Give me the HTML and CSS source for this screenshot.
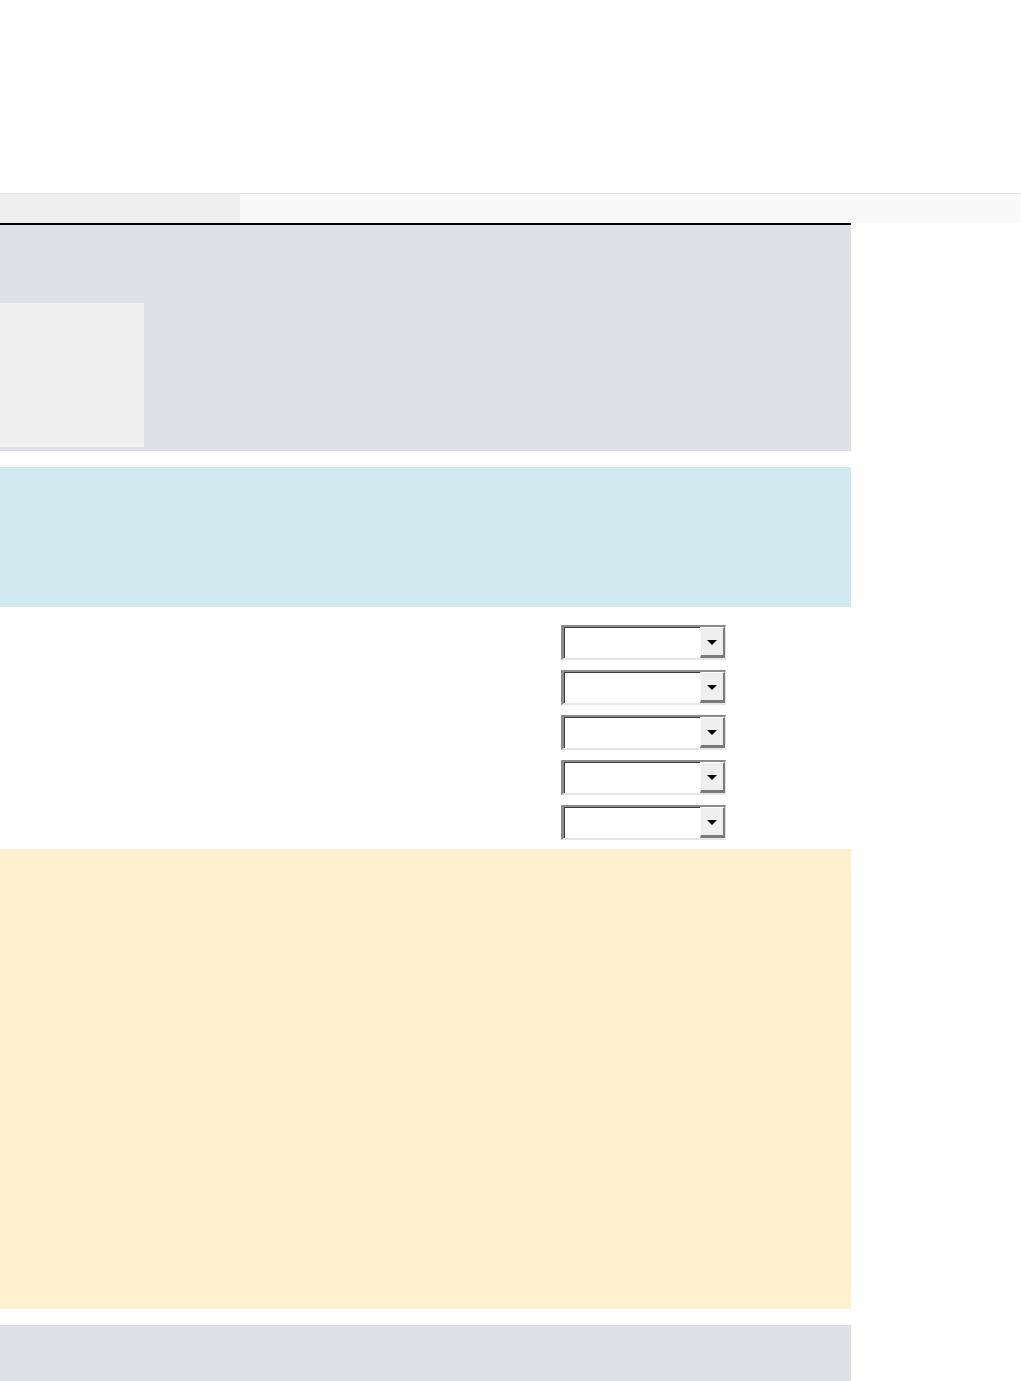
FILE: index.html
```html
<!DOCTYPE html>
<html lang="en">
<head>
    <meta charset="UTF-8">
    <meta name="viewport" content="width=device-width, initial-scale=1.0">
    <title>Settings</title>
    <link rel="stylesheet" href="styles.css">
</head>
<body>
    <header class="page-header"></header>

    <nav class="tab-bar">
        <div class="tab tab-active"></div>
        <div class="tab-rest"></div>
    </nav>

    <main class="content">
        <section class="panel panel-grey">
            <div class="thumb"></div>
        </section>

        <section class="panel panel-blue"></section>

        <!-- form rows: empty labels on the left, dropdowns on the right -->
        <section class="form-rows">
            <div class="form-row">
                <span class="form-label"></span>
                <div class="combo"><span class="combo-value"></span><span class="combo-btn"><i class="arrow"></i></span></div>
            </div>
            <div class="form-row">
                <span class="form-label"></span>
                <div class="combo"><span class="combo-value"></span><span class="combo-btn"><i class="arrow"></i></span></div>
            </div>
            <div class="form-row">
                <span class="form-label"></span>
                <div class="combo"><span class="combo-value"></span><span class="combo-btn"><i class="arrow"></i></span></div>
            </div>
            <div class="form-row">
                <span class="form-label"></span>
                <div class="combo"><span class="combo-value"></span><span class="combo-btn"><i class="arrow"></i></span></div>
            </div>
            <div class="form-row">
                <span class="form-label"></span>
                <div class="combo"><span class="combo-value"></span><span class="combo-btn"><i class="arrow"></i></span></div>
            </div>
        </section>

        <section class="panel panel-yellow"></section>

        <section class="panel panel-footer"></section>
    </main>
</body>
</html>
```

FILE: styles.css
```css
* {
    margin: 0;
    padding: 0;
    box-sizing: border-box;
}
body {
    background: #fff;
    font-family: 'Liberation Sans', Arial, sans-serif;
    font-size: 14px;
    color: #333;
}
.page-header {
    height: 194px;
    border-bottom: 1px solid #e0e0e0;
    width: 1020px;
}
.tab-bar {
    display: flex;
    width: 1020px;
    height: 29px;
    background: #f9f9f9;
}
.tab {
    width: 240px;
}
.tab-active {
    background: #efefef;
}
.tab-rest {
    flex: 1;
}
.content {
    width: 851px;
    border-top: 2px solid #000;
}
.panel-grey {
    height: 226px;
    background: #dee0e5;
    padding-top: 78px;
}
.thumb {
    width: 144px;
    height: 144px;
    background: #efefef;
}
.panel-blue {
    margin-top: 16px;
    height: 140px;
    background: #d1eaef;
}
.form-rows {
    display: flex;
    flex-direction: column;
    gap: 10px;
    padding: 18px 0 9px;
}
.form-row {
    display: grid;
    grid-template-columns: 561px 165px;
}
.combo {
    display: flex;
    height: 35px;
    background: #fff;
    border-style: solid;
    border-width: 2px 1px 2px 3px;
    border-color: #8c8c8c #e6e6e6 #e6e6e6 #8c8c8c;
    box-shadow: inset 1px 1px 0 #3c3c3c;
}
.combo-value {
    flex: 1;
}
.combo-btn {
    width: 25px;
    display: flex;
    align-items: center;
    justify-content: center;
    background: #efefef;
    border-style: solid;
    border-width: 1px 2px 3px 1px;
    border-color: #fff #7a7a7a #7a7a7a #fff;
}
.arrow {
    display: block;
    width: 0;
    height: 0;
    border-left: 5px solid transparent;
    border-right: 5px solid transparent;
    border-top: 5px solid #000;
    margin-top: 2px;
}
.panel-yellow {
    height: 460px;
    background: #fdf0cf;
}
.panel-footer {
    margin-top: 16px;
    height: 60px;
    background: #dee0e5;
}
```
